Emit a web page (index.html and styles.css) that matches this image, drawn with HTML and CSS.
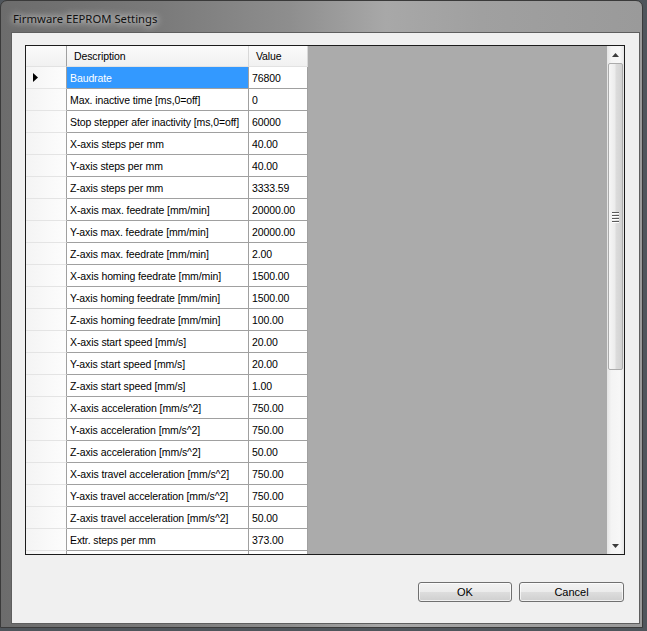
FILE: index.html
```html
<!DOCTYPE html>
<html lang="en">
<head>
    <meta charset="UTF-8">
    <title>Firmware EEPROM Settings</title>
    <link rel="stylesheet" href="styles.css">
</head>
<body>
    <div class="window">
        <div class="title-bar">
            <span class="title-text">Firmware EEPROM Settings</span>
        </div>
        <div class="client">
            <div class="data-grid">
                <div class="grid-table">
                    <!-- Column headers -->
                    <div class="grid-row head-row">
                        <div class="corner-cell"></div>
                        <div class="col-head">Description</div>
                        <div class="col-head">Value</div>
                    </div>

                    <div class="grid-row">
                        <div class="row-head current">
                            <svg width="5" height="9" viewBox="0 0 5 9"><path d="M0 0 L5 4.5 L0 9 Z" fill="#000"/></svg>
                        </div>
                        <div class="cell selected">Baudrate</div>
                        <div class="cell">76800</div>
                    </div>
                    <div class="grid-row">
                        <div class="row-head"></div>
                        <div class="cell">Max. inactive time [ms,0=off]</div>
                        <div class="cell">0</div>
                    </div>
                    <div class="grid-row">
                        <div class="row-head"></div>
                        <div class="cell">Stop stepper afer inactivity [ms,0=off]</div>
                        <div class="cell">60000</div>
                    </div>
                    <div class="grid-row">
                        <div class="row-head"></div>
                        <div class="cell">X-axis steps per mm</div>
                        <div class="cell">40.00</div>
                    </div>
                    <div class="grid-row">
                        <div class="row-head"></div>
                        <div class="cell">Y-axis steps per mm</div>
                        <div class="cell">40.00</div>
                    </div>
                    <div class="grid-row">
                        <div class="row-head"></div>
                        <div class="cell">Z-axis steps per mm</div>
                        <div class="cell">3333.59</div>
                    </div>
                    <div class="grid-row">
                        <div class="row-head"></div>
                        <div class="cell">X-axis max. feedrate [mm/min]</div>
                        <div class="cell">20000.00</div>
                    </div>
                    <div class="grid-row">
                        <div class="row-head"></div>
                        <div class="cell">Y-axis max. feedrate [mm/min]</div>
                        <div class="cell">20000.00</div>
                    </div>
                    <div class="grid-row">
                        <div class="row-head"></div>
                        <div class="cell">Z-axis max. feedrate [mm/min]</div>
                        <div class="cell">2.00</div>
                    </div>
                    <div class="grid-row">
                        <div class="row-head"></div>
                        <div class="cell">X-axis homing feedrate [mm/min]</div>
                        <div class="cell">1500.00</div>
                    </div>
                    <div class="grid-row">
                        <div class="row-head"></div>
                        <div class="cell">Y-axis homing feedrate [mm/min]</div>
                        <div class="cell">1500.00</div>
                    </div>
                    <div class="grid-row">
                        <div class="row-head"></div>
                        <div class="cell">Z-axis homing feedrate [mm/min]</div>
                        <div class="cell">100.00</div>
                    </div>
                    <div class="grid-row">
                        <div class="row-head"></div>
                        <div class="cell">X-axis start speed [mm/s]</div>
                        <div class="cell">20.00</div>
                    </div>
                    <div class="grid-row">
                        <div class="row-head"></div>
                        <div class="cell">Y-axis start speed [mm/s]</div>
                        <div class="cell">20.00</div>
                    </div>
                    <div class="grid-row">
                        <div class="row-head"></div>
                        <div class="cell">Z-axis start speed [mm/s]</div>
                        <div class="cell">1.00</div>
                    </div>
                    <div class="grid-row">
                        <div class="row-head"></div>
                        <div class="cell">X-axis acceleration [mm/s^2]</div>
                        <div class="cell">750.00</div>
                    </div>
                    <div class="grid-row">
                        <div class="row-head"></div>
                        <div class="cell">Y-axis acceleration [mm/s^2]</div>
                        <div class="cell">750.00</div>
                    </div>
                    <div class="grid-row">
                        <div class="row-head"></div>
                        <div class="cell">Z-axis acceleration [mm/s^2]</div>
                        <div class="cell">50.00</div>
                    </div>
                    <div class="grid-row">
                        <div class="row-head"></div>
                        <div class="cell">X-axis travel acceleration [mm/s^2]</div>
                        <div class="cell">750.00</div>
                    </div>
                    <div class="grid-row">
                        <div class="row-head"></div>
                        <div class="cell">Y-axis travel acceleration [mm/s^2]</div>
                        <div class="cell">750.00</div>
                    </div>
                    <div class="grid-row">
                        <div class="row-head"></div>
                        <div class="cell">Z-axis travel acceleration [mm/s^2]</div>
                        <div class="cell">50.00</div>
                    </div>
                    <div class="grid-row">
                        <div class="row-head"></div>
                        <div class="cell">Extr. steps per mm</div>
                        <div class="cell">373.00</div>
                    </div>
                    <!-- Partly visible row, cut by the grid edge -->
                    <div class="grid-row">
                        <div class="row-head"></div>
                        <div class="cell"></div>
                        <div class="cell"></div>
                    </div>
                </div>

                <div class="grid-empty"></div>

                <!-- Vertical scrollbar -->
                <div class="vscroll">
                    <div class="sb-arrow">
                        <svg width="7" height="4" viewBox="0 0 7 4"><path d="M0 4 L3.5 0 L7 4 Z" fill="#3c3c3c"/></svg>
                    </div>
                    <div class="sb-thumb">
                        <div class="sb-grip"><span></span><span></span><span></span><span></span></div>
                    </div>
                    <div class="sb-track"></div>
                    <div class="sb-arrow">
                        <svg width="7" height="4" viewBox="0 0 7 4"><path d="M0 0 L7 0 L3.5 4 Z" fill="#3c3c3c"/></svg>
                    </div>
                </div>
            </div>

            <div class="actions">
                <button class="btn btn-ok">OK</button>
                <button class="btn btn-cancel">Cancel</button>
            </div>
        </div>
    </div>
</body>
</html>
```

FILE: styles.css
```css
/* Basic styling */
body {
    margin: 0;
    background: #4f555b;
    font-family: "Liberation Sans", Arial, sans-serif;
    font-size: 10.5px;
    letter-spacing: -0.1px;
    color: #000;
}

/* Window frame */
.window {
    width: 643px;
    height: 628px;
    box-sizing: border-box;
    border: 1px solid #3a3a3a;
    border-radius: 7px 7px 0 0;
    padding: 0 2px 3px 10px;
    display: flex;
    flex-direction: column;
    background: linear-gradient(to right, #6c6c6c 0%, #7a7a7a 25%, #8e8e8e 45%, #a8a8a8 60%, #a0a0a0 75%, #9a9a9a 100%);
}

.title-bar {
    height: 31px;
    display: flex;
    align-items: center;
    padding-left: 2px;
}

.title-text {
    font-family: "Noto Sans", "Open Sans", sans-serif;
    font-size: 11.3px;
    letter-spacing: 0;
    color: #111;
    text-shadow: 0 0 6px rgba(255, 255, 255, 0.9), 0 0 10px rgba(255, 255, 255, 0.6);
    margin-top: 3px;
}

.client {
    flex: 1;
    background: #f0f0f0;
    border: 1px solid #5e5e5e;
    padding: 12px 14px 0 13px;
    display: flex;
    flex-direction: column;
}

/* Data grid */
.data-grid {
    height: 510px;
    box-sizing: border-box;
    border: 1px solid #1c1c1c;
    display: flex;
    overflow: hidden;
    background: #ababab;
}

.grid-table {
    width: 282px;
    overflow: hidden;
}

.grid-row {
    display: grid;
    grid-template-columns: 41px 182px 59px;
    height: 22px;
}

.head-row {
    height: 21px;
}

.corner-cell,
.col-head {
    background: linear-gradient(#fbfbfb, #f1f1f1);
    border-right: 1px solid #d8d8d8;
    border-bottom: 1px solid #e2e2e2;
    display: flex;
    align-items: center;
    padding-left: 7px;
}

.corner-cell {
    border-right-color: #a0a0a0;
}

.row-head {
    background: linear-gradient(to right, #f4f4f4, #fdfdfd);
    border-right: 1px solid #a0a0a0;
    border-bottom: 1px solid #e4e4e4;
    display: flex;
    align-items: center;
    padding-left: 7px;
}

.cell {
    background: #fff;
    border-right: 1px solid #a0a0a0;
    border-bottom: 1px solid #a0a0a0;
    display: flex;
    align-items: center;
    padding-left: 3px;
    white-space: nowrap;
    overflow: hidden;
}

.cell.selected {
    background: #3399ff;
    color: #fff;
}

.grid-empty {
    flex: 1;
}

/* Scrollbar */
.vscroll {
    width: 17px;
    display: flex;
    flex-direction: column;
    background: linear-gradient(to right, #e4e4e4, #f4f4f4 25%, #f7f7f7 75%, #e6e6e6);
}

.sb-arrow {
    height: 17px;
    display: flex;
    align-items: center;
    justify-content: center;
}

.sb-thumb {
    height: 305px;
    margin: 0 1px;
    border: 1px solid #ababab;
    border-radius: 2px;
    background: linear-gradient(to right, #f6f6f6, #ececec 45%, #dcdcdc 55%, #d2d2d2);
    display: flex;
    align-items: center;
    justify-content: center;
}

.sb-grip {
    display: flex;
    flex-direction: column;
    gap: 1px;
    margin-top: 1px;
}

.sb-grip span {
    width: 7px;
    height: 1px;
    background: #5a5a5a;
    border-bottom: 1px solid #fff;
}

.sb-track {
    flex: 1;
}

/* Dialog buttons */
.actions {
    display: flex;
    justify-content: flex-end;
    gap: 7px;
    margin-top: 27px;
    padding-right: 1px;
}

.btn {
    height: 20px;
    border: 1px solid #707070;
    border-radius: 3px;
    background: linear-gradient(#f2f2f2 0%, #ebebeb 50%, #dddddd 51%, #cfcfcf 100%);
    font-family: "Liberation Sans", Arial, sans-serif;
    font-size: 11px;
    color: #000;
    padding: 0;
    box-shadow: inset 0 0 0 1px rgba(255, 255, 255, 0.7);
}

.btn-ok {
    width: 94px;
}

.btn-cancel {
    width: 105px;
}
```
